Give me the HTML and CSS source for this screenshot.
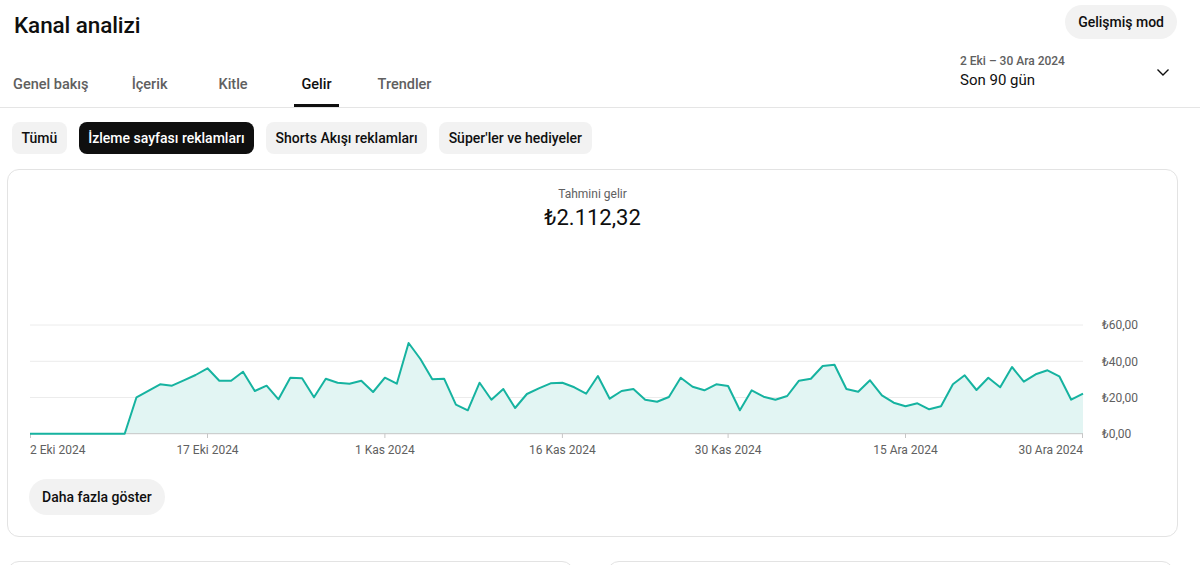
FILE: index.html
```html
<!DOCTYPE html>
<html lang="tr">
<head>
<meta charset="utf-8">
<title>Kanal analizi</title>
<link rel="stylesheet" href="styles.css">
</head>
<body>
<header class="titlebar">
  <h1 class="title">Kanal analizi</h1>
  <button class="pill-btn">Gelişmiş mod</button>
</header>
<nav class="nav">
  <div class="tabs">
    <a class="tab">Genel bakış</a>
    <a class="tab">İçerik</a>
    <a class="tab">Kitle</a>
    <a class="tab active">Gelir</a>
    <a class="tab">Trendler</a>
  </div>
  <div class="date">
    <div class="date-text">
      <div class="date-range">2 Eki – 30 Ara 2024</div>
      <div class="date-main">Son 90 gün</div>
    </div>
    <svg class="chev" width="24" height="24" viewBox="0 0 24 24"><path d="M6.5 9.5l5.5 5.5 5.5-5.5" fill="none" stroke="#0f0f0f" stroke-width="1.4"/></svg>
  </div>
</nav>
<div class="chips">
  <span class="chip">Tümü</span>
  <span class="chip active">İzleme sayfası reklamları</span>
  <span class="chip">Shorts Akışı reklamları</span>
  <span class="chip">Süper'ler ve hediyeler</span>
</div>
<section class="card">
  <div class="metric-label">Tahmini gelir</div>
  <div class="metric-value">₺2.112,32</div>
  <svg class="chart" width="1169" height="230" viewBox="8 232 1169 230">
    <g class="grid">
      <line x1="30" y1="325" x2="1083" y2="325"/>
      <line x1="30" y1="361.3" x2="1083" y2="361.3"/>
      <line x1="30" y1="397.5" x2="1083" y2="397.5"/>
    </g>
    <polygon class="area" points="30,433.7 124.7,433.7 136.5,397.3 148.3,390.8 160.1,384.3 172,385.7 183.8,380.4 195.6,375 207.5,368.3 219.3,380.7 231.1,380.7 243,371.7 254.8,391 266.6,385.7 278.5,399.3 290.3,377.7 302.1,378.3 314,397.3 325.8,378.7 337.6,382.7 349.5,383.7 361.3,380.7 373.1,392 384.9,377.7 396.8,383.7 408.6,343 420.4,359 432.3,379.3 444.1,378.7 455.9,404.7 467.8,410.3 479.6,382.7 491.4,399.7 503.3,389 515.1,408 526.9,394 538.8,388.3 550.6,383.3 562.4,382.7 574.3,387.3 586.1,393.7 597.9,376 609.7,398.7 621.6,391 633.4,389 645.2,399.7 657.1,401.7 668.9,397 680.7,377.7 692.6,386.7 704.4,390.3 716.2,384.3 728.1,386 739.9,410.3 751.7,390.3 763.6,396.7 775.4,399.7 787.2,396 799,380.7 810.9,378.7 822.7,366 834.5,364.7 846.4,389 858.2,391.7 870,380.3 881.9,395.3 893.7,402.7 905.5,406.3 917.4,403.3 929.2,409.3 941,406.3 952.9,384.3 964.7,375.3 976.5,390 988.3,377.7 1000.2,387.3 1012,367 1023.8,381.7 1035.7,374.3 1047.5,370.3 1059.3,376.3 1071.2,399.7 1083,393.7 1083,433.7"/>
    <g class="axis">
      <line x1="30" y1="433.7" x2="1083" y2="433.7"/>
      <line x1="30.5" y1="433.7" x2="30.5" y2="438"/>
      <line x1="207.5" y1="433.7" x2="207.5" y2="438"/>
      <line x1="384.9" y1="433.7" x2="384.9" y2="438"/>
      <line x1="562.4" y1="433.7" x2="562.4" y2="438"/>
      <line x1="728.1" y1="433.7" x2="728.1" y2="438"/>
      <line x1="905.5" y1="433.7" x2="905.5" y2="438"/>
      <line x1="1082.5" y1="433.7" x2="1082.5" y2="438"/>
    </g>
    <polyline class="line" points="30,433.7 124.7,433.7 136.5,397.3 148.3,390.8 160.1,384.3 172,385.7 183.8,380.4 195.6,375 207.5,368.3 219.3,380.7 231.1,380.7 243,371.7 254.8,391 266.6,385.7 278.5,399.3 290.3,377.7 302.1,378.3 314,397.3 325.8,378.7 337.6,382.7 349.5,383.7 361.3,380.7 373.1,392 384.9,377.7 396.8,383.7 408.6,343 420.4,359 432.3,379.3 444.1,378.7 455.9,404.7 467.8,410.3 479.6,382.7 491.4,399.7 503.3,389 515.1,408 526.9,394 538.8,388.3 550.6,383.3 562.4,382.7 574.3,387.3 586.1,393.7 597.9,376 609.7,398.7 621.6,391 633.4,389 645.2,399.7 657.1,401.7 668.9,397 680.7,377.7 692.6,386.7 704.4,390.3 716.2,384.3 728.1,386 739.9,410.3 751.7,390.3 763.6,396.7 775.4,399.7 787.2,396 799,380.7 810.9,378.7 822.7,366 834.5,364.7 846.4,389 858.2,391.7 870,380.3 881.9,395.3 893.7,402.7 905.5,406.3 917.4,403.3 929.2,409.3 941,406.3 952.9,384.3 964.7,375.3 976.5,390 988.3,377.7 1000.2,387.3 1012,367 1023.8,381.7 1035.7,374.3 1047.5,370.3 1059.3,376.3 1071.2,399.7 1083,393.7"/>
    <g class="ylabels">
      <text x="1102" y="329.3">₺60,00</text>
      <text x="1102" y="365.6">₺40,00</text>
      <text x="1102" y="401.8">₺20,00</text>
      <text x="1102" y="438">₺0,00</text>
    </g>
    <g class="xlabels">
      <text x="30" y="453.5" class="start">2 Eki 2024</text>
      <text x="207.5" y="453.5">17 Eki 2024</text>
      <text x="384.9" y="453.5">1 Kas 2024</text>
      <text x="562.4" y="453.5">16 Kas 2024</text>
      <text x="728.1" y="453.5">30 Kas 2024</text>
      <text x="905.5" y="453.5">15 Ara 2024</text>
      <text x="1083" y="453.5" class="end">30 Ara 2024</text>
    </g>
  </svg>
  <button class="pill-btn more">Daha fazla göster</button>
</section>
<div class="lower">
  <section class="card small"></section>
  <section class="card small"></section>
</div>
</body>
</html>
```

FILE: styles.css
```css
* { box-sizing: border-box; }
html, body { margin: 0; padding: 0; background: #fff; }
body {
  font-family: Roboto, "Noto Sans", Arial, sans-serif;
  color: #0f0f0f;
  overflow: hidden;
}

.titlebar {
  height: 50px;
  display: flex;
  justify-content: space-between;
  align-items: flex-start;
  padding: 0 23px 0 14px;
}
.title {
  margin: 9px 0 0;
  font-size: 22.5px;
  line-height: 32px;
  font-weight: 500;
  letter-spacing: -0.1px;
}
.pill-btn {
  border: 0;
  background: #f2f2f2;
  color: #0f0f0f;
  font-family: Roboto, Arial, sans-serif;
  font-size: 14px;
  font-weight: 500;
  height: 34px;
  padding: 0 13px;
  border-radius: 17px;
  margin-top: 5px;
}

.nav {
  height: 58px;
  display: flex;
  justify-content: space-between;
  align-items: flex-start;
  border-bottom: 1px solid #e5e5e5;
  padding: 0 25px 0 13px;
}
.tabs {
  display: flex;
  gap: 38.5px;
  align-self: flex-end;
}
.tab {
  position: relative;
  min-width: 45px;
  height: 45px;
  padding-bottom: 1px;
  display: flex;
  align-items: center;
  justify-content: center;
  font-size: 14.5px;
  font-weight: 500;
  color: #606060;
}
.tab.active { color: #0f0f0f; }
.tab.active::after {
  content: "";
  position: absolute;
  left: 0;
  right: 0;
  bottom: 0;
  height: 3px;
  background: #0f0f0f;
}
.date {
  width: 215px;
  margin-top: 3px;
  display: flex;
  justify-content: space-between;
  align-items: center;
}
.date-range {
  font-size: 12px;
  line-height: 16px;
  font-weight: 500;
  color: #606060;
}
.date-main {
  margin-top: 1px;
  font-size: 15px;
  line-height: 20px;
  color: #0f0f0f;
}
.chev { display: block; }

.chips {
  display: flex;
  gap: 12px;
  padding: 14px 0 0 12px;
}
.chip {
  height: 32px;
  padding: 0 9.5px;
  display: flex;
  align-items: center;
  border-radius: 8px;
  background: #f2f2f2;
  font-size: 14px;
  font-weight: 500;
  color: #0f0f0f;
}
.chip.active { background: #0f0f0f; color: #fff; }

.card {
  margin: 15px 22px 0 7px;
  border: 1px solid #e3e3e3;
  border-radius: 12px;
  padding: 16px 0 21px;
}
.metric-label {
  text-align: center;
  font-size: 12px;
  line-height: 16px;
  color: #606060;
}
.metric-value {
  margin-top: 2px;
  text-align: center;
  font-size: 22px;
  line-height: 28px;
  color: #0f0f0f;
}
.chart { display: block; }
.grid line { stroke: #ececec; stroke-width: 1; }
.axis line { stroke: #c6c6c6; stroke-width: 1; }
.area { fill: #e2f5f3; }
.line { fill: none; stroke: #16b3a0; stroke-width: 2; stroke-linejoin: round; }
.ylabels text, .xlabels text {
  font-family: Roboto, Arial, sans-serif;
  font-size: 12px;
  fill: #606060;
}
.xlabels text { text-anchor: middle; }
.xlabels text.start { text-anchor: start; }
.xlabels text.end { text-anchor: end; }

.more {
  display: block;
  margin: 17px 0 0 21px;
  height: 36px;
  padding: 0 13px;
  border-radius: 18px;
}

.lower {
  display: flex;
  gap: 33px;
  margin: 24px 26px 0 7px;
}
.card.small {
  flex: 1;
  margin: 0;
  height: 200px;
}
```
